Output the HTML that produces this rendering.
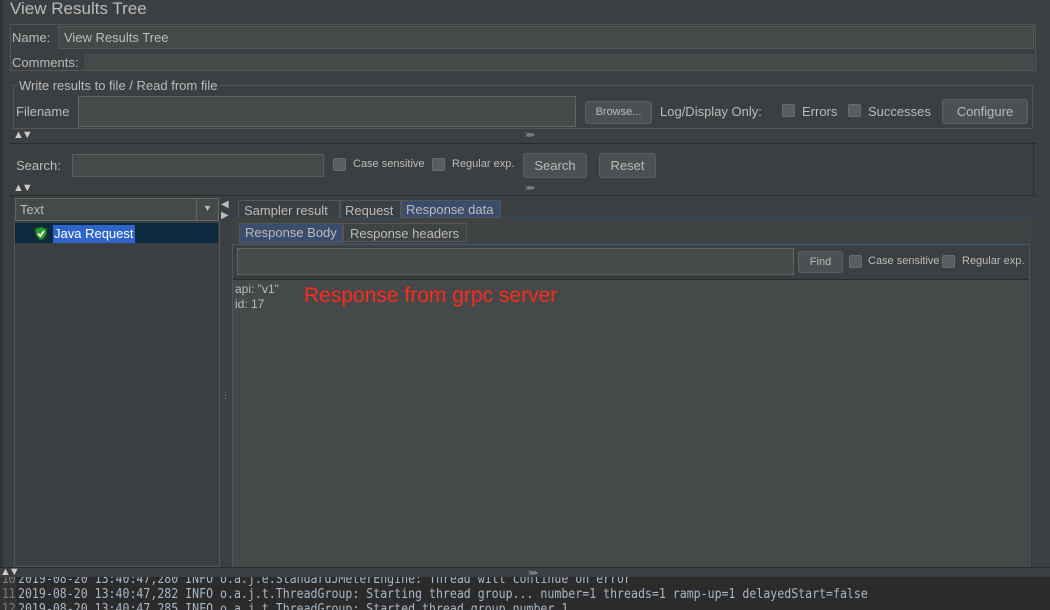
<!DOCTYPE html>
<html><head><style>
*{margin:0;padding:0;box-sizing:border-box}
body{width:1050px;height:610px;background:#3c3f41;font-family:"Liberation Sans",sans-serif;color:#bbbbbb;font-size:13px;position:relative;overflow:hidden}
.a{position:absolute;white-space:nowrap}
.fld{position:absolute;background:#45494a;border:1px solid #646464}
.btn{position:absolute;background:#4c5052;border:1px solid #5e6060;border-radius:3px;color:#bbb;text-align:center}
.cb{position:absolute;width:13px;height:13px;background:#5a5d5f;border:1px solid #6b6b6b;border-radius:2px}
.tri{position:absolute;font-size:11px;letter-spacing:-2px;color:#ccc}
</style></head><body>
<div class="a" style="left:0;top:0;width:3px;height:568px;background:#2f3133"></div>
<div class="a" style="left:10px;top:-1px;font-size:17px;color:#bbb">View Results Tree</div>
<div class="a" style="left:10px;top:24px;width:1026px;height:47px;border:1px solid #555"></div>
<div class="a" style="left:12px;top:30px">Name:</div>
<div class="fld" style="left:58px;top:26px;width:976px;height:23px;border-color:#555"></div>
<div class="a" style="left:64px;top:30px">View Results Tree</div>
<div class="a" style="left:12px;top:55px">Comments:</div>
<div class="a" style="left:84px;top:54px;width:950px;height:16px;background:#45494a"></div>
<div class="a" style="left:13px;top:85px;width:1020px;height:44px;border:1px solid #555"></div>
<div class="a" style="left:17px;top:78px;background:#3c3f41;padding:0 2px">Write results to file / Read from file</div>
<div class="a" style="left:16px;top:104px">Filename</div>
<div class="fld" style="left:78px;top:96px;width:498px;height:31px"></div>
<div class="btn" style="left:585px;top:101px;width:67px;height:23px;font-size:11px;line-height:21px">Browse...</div>
<div class="a" style="left:660px;top:104px">Log/Display Only:</div>
<div class="cb" style="left:782px;top:104px"></div><div class="a" style="left:802px;top:104px">Errors</div>
<div class="cb" style="left:848px;top:104px"></div><div class="a" style="left:868px;top:104px">Successes</div>
<div class="btn" style="left:942px;top:99px;width:86px;height:25px;line-height:23px">Configure</div>
<div class="tri" style="left:13px;top:129px">▲▼</div>
<div class="a" style="left:525px;top:131px;font-size:7px;color:#aaa">⋙</div>
<div class="a" style="left:10px;top:143px;width:1026px;height:1px;background:#2b2b2b"></div>
<div class="a" style="left:1033px;top:143px;width:1px;height:52px;background:#2b2b2b"></div>
<div class="a" style="left:16px;top:158px">Search:</div>
<div class="fld" style="left:72px;top:154px;width:252px;height:23px;border-color:#5e5e5e"></div>
<div class="cb" style="left:333px;top:158px"></div><div class="a" style="left:353px;top:158px;font-size:11px">Case sensitive</div>
<div class="cb" style="left:432px;top:158px"></div><div class="a" style="left:452px;top:158px;font-size:11px">Regular exp.</div>
<div class="btn" style="left:523px;top:153px;width:64px;height:25px;line-height:23px">Search</div>
<div class="btn" style="left:599px;top:153px;width:57px;height:25px;line-height:23px">Reset</div>
<div class="tri" style="left:13px;top:182px">▲▼</div>
<div class="a" style="left:525px;top:184px;font-size:7px;color:#aaa">⋙</div>
<div class="a" style="left:10px;top:195px;width:1026px;height:1px;background:#2b2b2b"></div>
<div class="fld" style="left:15px;top:198px;width:204px;height:23px;border-color:#666"></div>
<div class="a" style="left:20px;top:202px">Text</div>
<div class="a" style="left:196px;top:199px;width:1px;height:21px;background:#666"></div>
<div class="a" style="left:203px;top:203px;font-size:9px">▼</div>
<div class="a" style="left:15px;top:223px;width:203px;height:20px;background:#0d293e"></div>
<svg class="a" style="left:34px;top:226px" width="14" height="15" viewBox="0 0 14 15"><path d="M7 1 L13 3 L12 9 Q10 13 7 14 Q4 13 2 9 L1 3Z" fill="#2a9a2a" stroke="#1a5a1a"/><path d="M4 7.5 L6.3 10 L10 5" stroke="#fff" stroke-width="1.8" fill="none"/></svg>
<div class="a" style="left:53px;top:225px;height:18px;background:#2f65ca;color:#fff;padding:1px 1px">Java Request</div>
<div class="a" style="left:14px;top:222px;width:206px;height:345px;border:1px solid #555;border-top:none"></div>
<div class="a" style="left:221px;top:199px;font-size:10px;line-height:11px">◀<br>▶</div>
<div class="a" style="left:232px;top:217px;width:800px;height:1px;background:#2d4a6e"></div>
<div class="a" style="left:238px;top:200px;width:102px;height:19px;background:#3c3f41;border:1px solid #555;padding:2px 5px">Sampler result</div>
<div class="a" style="left:340px;top:200px;width:61px;height:19px;border:1px solid #555;padding:2px 4px">Request</div>
<div class="a" style="left:401px;top:200px;width:100px;height:18px;background:#3b4d6d;border:1px solid #555;padding:1px 4px">Response data</div>
<div class="a" style="left:232px;top:218px;width:799px;height:24px;background:#404344"></div>
<div class="a" style="left:239px;top:223px;width:104px;height:20px;background:#3b4d6d;border:1px solid #555;padding:1px 5px">Response Body</div>
<div class="a" style="left:343px;top:223px;width:124px;height:19px;border:1px solid #555;padding:2px 6px">Response headers</div>
<div class="a" style="left:232px;top:243px;width:799px;height:1px;background:#2d4a6e"></div>
<div class="a" style="left:232px;top:244px;width:798px;height:324px;background:#3c3f41;border:1px solid #555"></div>
<div class="fld" style="left:237px;top:248px;width:557px;height:27px"></div>
<div class="btn" style="left:798px;top:251px;width:45px;height:22px;font-size:11px;line-height:20px">Find</div>
<div class="cb" style="left:849px;top:255px"></div><div class="a" style="left:868px;top:255px;font-size:11px">Case sensitive</div>
<div class="cb" style="left:942px;top:255px"></div><div class="a" style="left:962px;top:255px;font-size:11px">Regular exp.</div>
<div class="a" style="left:233px;top:279px;width:795px;height:288px;background:#45494a;border-top:1px solid #2b2b2b"></div>
<div class="a" style="left:235px;top:282px;font-size:12px;line-height:15px">api: "v1"<br>id: 17</div>
<div class="a" style="left:304px;top:284px;font-size:21px;color:#ff2a1a">Response from grpc server</div>
<div class="a" style="left:221px;top:390px;font-size:9px;color:#888">⋮</div>
<div class="a" style="left:0;top:567px;width:1050px;height:10px;background:#3c3f41;border-top:1px solid #2b2b2b"></div>
<div class="tri" style="left:0;top:566px">▲▼</div>
<div class="a" style="left:528px;top:569px;font-size:7px;color:#aaa">⋙</div>
<div class="a" style="left:0;top:577px;width:1050px;height:33px;background:#2b2b2b;overflow:hidden;font-family:'DejaVu Sans Mono','Liberation Mono',monospace;font-size:13px;color:#a9b7c6;line-height:15px">
<div style="position:absolute;left:0;top:-5px;width:16px;height:50px;background:#313335;color:#777;text-align:right;padding-right:1px;letter-spacing:-1px">10<br>11<br>12</div>
<div style="position:absolute;left:18px;top:-5px;white-space:pre;transform:scaleX(0.89);transform-origin:0 0">2019-08-20 13:40:47,280 INFO o.a.j.e.StandardJMeterEngine: Thread will continue on error
2019-08-20 13:40:47,282 INFO o.a.j.t.ThreadGroup: Starting thread group... number=1 threads=1 ramp-up=1 delayedStart=false
2019-08-20 13:40:47,285 INFO o.a.j.t.ThreadGroup: Started thread group number 1</div>
</div>
</body></html>
